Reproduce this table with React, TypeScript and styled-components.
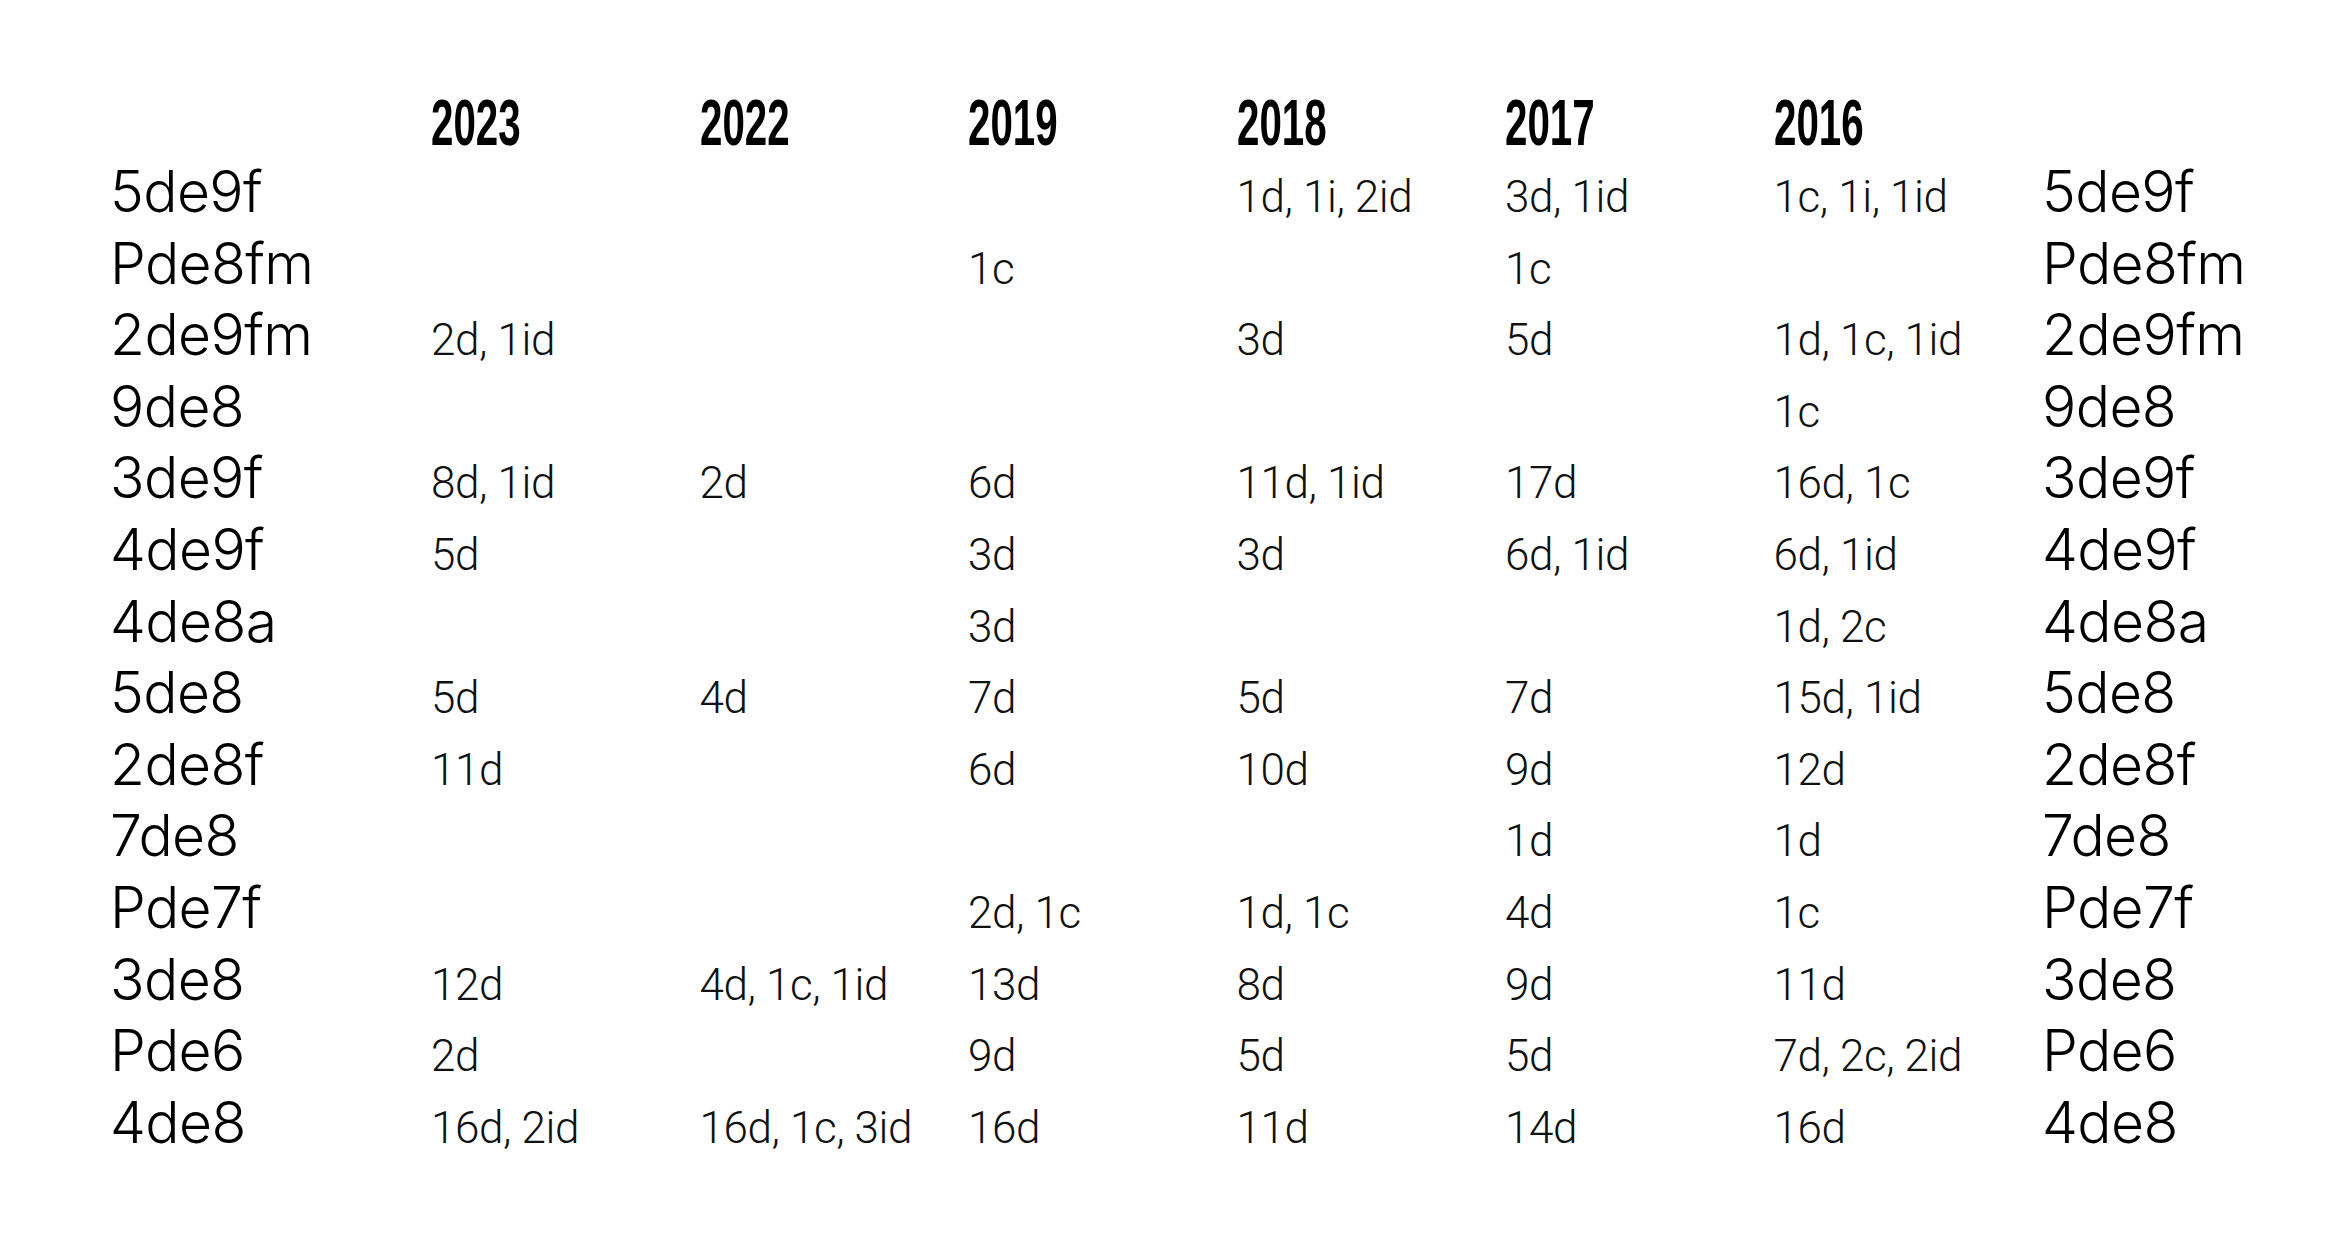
import styled, { createGlobalStyle } from 'styled-components';

const YEARS = ['2023', '2022', '2019', '2018', '2017', '2016'];

const ROWS: { label: string; cells: string[] }[] = [
  { label: '5de9f', cells: ['', '', '', '1d, 1i, 2id', '3d, 1id', '1c, 1i, 1id'] },
  { label: 'Pde8fm', cells: ['', '', '1c', '', '1c', ''] },
  { label: '2de9fm', cells: ['2d, 1id', '', '', '3d', '5d', '1d, 1c, 1id'] },
  { label: '9de8', cells: ['', '', '', '', '', '1c'] },
  { label: '3de9f', cells: ['8d, 1id', '2d', '6d', '11d, 1id', '17d', '16d, 1c'] },
  { label: '4de9f', cells: ['5d', '', '3d', '3d', '6d, 1id', '6d, 1id'] },
  { label: '4de8a', cells: ['', '', '3d', '', '', '1d, 2c'] },
  { label: '5de8', cells: ['5d', '4d', '7d', '5d', '7d', '15d, 1id'] },
  { label: '2de8f', cells: ['11d', '', '6d', '10d', '9d', '12d'] },
  { label: '7de8', cells: ['', '', '', '', '1d', '1d'] },
  { label: 'Pde7f', cells: ['', '', '2d, 1c', '1d, 1c', '4d', '1c'] },
  { label: '3de8', cells: ['12d', '4d, 1c, 1id', '13d', '8d', '9d', '11d'] },
  { label: 'Pde6', cells: ['2d', '', '9d', '5d', '5d', '7d, 2c, 2id'] },
  { label: '4de8', cells: ['16d, 2id', '16d, 1c, 3id', '16d', '11d', '14d', '16d'] },
];

const GlobalStyle = createGlobalStyle`
  html, body {
    margin: 0;
    padding: 0;
    background: #fff;
  }
`;

const Page = styled.main`
  box-sizing: border-box;
  width: 2340px;
  height: 1236px;
  padding: 91px 0 0 110px;
  background: #fff;
  color: #000;
`;

const Row = styled.div<{ $head?: boolean }>`
  display: grid;
  grid-template-columns: 321px repeat(6, 268.5px) auto;
  align-items: baseline;
  height: ${(p) => (p.$head ? '72px' : '71.6px')};
`;

const Year = styled.span`
  display: inline-block;
  font-family: 'Liberation Sans', Arial, sans-serif;
  font-weight: 700;
  font-size: 64px;
  line-height: 1;
  transform: scaleX(0.63);
  transform-origin: left center;
  white-space: nowrap;
`;

const Label = styled.span`
  font-family: Inter, 'Liberation Sans', sans-serif;
  font-weight: 350;
  font-size: 57px;
  letter-spacing: -0.6px;
  line-height: 1;
  white-space: nowrap;
`;

const Cell = styled.span`
  font-family: Roboto, 'Open Sans', sans-serif;
  font-weight: 300;
  font-size: 44px;
  letter-spacing: -0.4px;
  line-height: 1;
  color: #111;
  white-space: nowrap;
`;

export default function App() {
  return (
    <>
      <GlobalStyle />
      <Page>
        <Row $head>
          <span />
          {YEARS.map((y) => (
            <Year key={y}>{y}</Year>
          ))}
          <span />
        </Row>
        {ROWS.map((r) => (
          <Row key={r.label}>
            <Label>{r.label}</Label>
            {r.cells.map((c, i) => (
              <Cell key={i}>{c}</Cell>
            ))}
            <Label>{r.label}</Label>
          </Row>
        ))}
      </Page>
    </>
  );
}
